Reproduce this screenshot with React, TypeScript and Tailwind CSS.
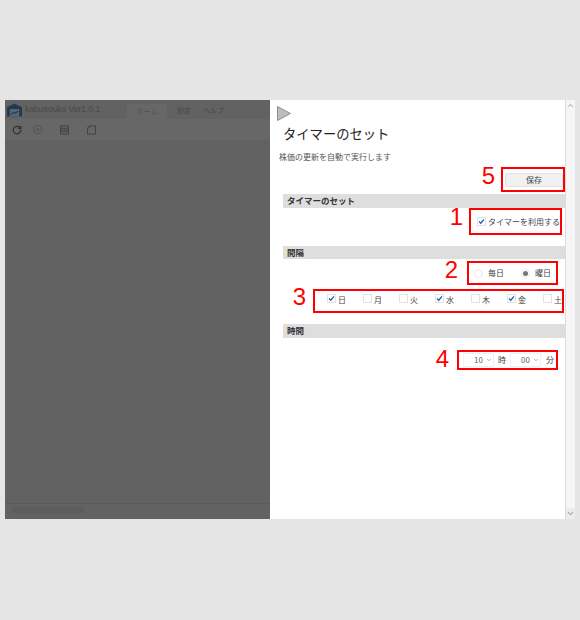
import { RotateCw, ChevronUp, ChevronDown } from "lucide-react";

const days = [
  { label: "日", on: true },
  { label: "月", on: false },
  { label: "火", on: false },
  { label: "水", on: true },
  { label: "木", on: false },
  { label: "金", on: true },
  { label: "土", on: false },
];

function Tick({ on }: { on: boolean }) {
  return (
    <span className="w-[9px] h-[9px] shrink-0 border border-[#e2e2e2] bg-white flex items-center justify-center">
      {on && (
        <svg viewBox="0 0 10 10" className="w-[9px] h-[9px]">
          <path d="M1.5 5 L4 7.5 L8.5 2" fill="none" stroke="#1d5fa8" strokeWidth="1.8" />
        </svg>
      )}
    </span>
  );
}

function Bar({ title, className }: { title: string; className: string }) {
  return (
    <div className={`ml-[13px] bg-[#dedede] pl-[4px] text-[8.5px] leading-[13px] font-bold text-[#333] ${className}`}>
      {title}
    </div>
  );
}

function Num({ n, className }: { n: string; className: string }) {
  return (
    <span className={`h-0 flex items-center text-[24px] leading-none text-[#ff0000] font-['Liberation_Sans',sans-serif] ${className}`}>
      {n}
    </span>
  );
}

function Drop({ value }: { value: string }) {
  return (
    <span className="w-[31px] h-[14px] border border-[#f0f0f0] flex items-center justify-end pr-[1px] gap-[3px] text-[8px] text-[#666]">
      {value}
      <ChevronDown className="w-[6px] h-[6px] text-[#999]" strokeWidth={3} />
    </span>
  );
}

export default function App() {
  return (
    <div className="w-[580px] h-[620px] bg-[#e5e5e5] pt-[100px] pl-[5px] flex items-start overflow-hidden font-['Noto_Sans_CJK_JP',sans-serif]">
      {/* dimmed app behind the panel */}
      <div className="w-[265px] h-[419px] bg-[#626262] flex flex-col">
        <div className="h-[19px] flex items-end text-[#484848]">
          <svg viewBox="0 0 16 14" className="w-[15px] h-[14px] ml-[2px] mb-[2px]">
            <path d="M0 14 V4 L8 0 L16 4 V14 Z" fill="#1f3a56" />
            <rect x="3" y="6" width="10" height="8" fill="#5b6670" />
            <path d="M4 12 L7 9.5 L9 10.5 L12 8" fill="none" stroke="#1f3a56" strokeWidth="1.2" />
          </svg>
          <span className="ml-[3px] mb-[3px] w-[102px] text-[8.5px] leading-[14px] font-['Liberation_Sans',sans-serif] whitespace-nowrap">
            kabusouko Ver1.0.1
          </span>
          <span className="w-[40px] h-[15px] bg-[#676767] text-center text-[7px] leading-[15px] text-[#3e566e]">ホーム</span>
          <span className="ml-[10px] mb-[2px] text-[7px] leading-[13px]">設定</span>
          <span className="ml-[12px] mb-[2px] text-[7px] leading-[13px]">ヘルプ</span>
        </div>
        <div className="h-[21px] bg-[#676767] flex items-center pl-[7px] text-[#2f2f2f]">
          <RotateCw className="w-[10px] h-[10px]" strokeWidth={3} />
          <svg viewBox="0 0 10 10" className="ml-[11px] w-[9px] h-[9px]">
            <circle cx="5" cy="5" r="4.5" fill="none" stroke="#525252" />
            <path d="M3.3 3.3 L6.7 6.7 M6.7 3.3 L3.3 6.7" stroke="#525252" />
          </svg>
          <svg viewBox="0 0 10 10" className="ml-[18px] w-[9px] h-[10px]">
            <path d="M0.5 0.5 H9.5 V9.5 H0.5 Z M0.5 3 H9.5 M0.5 5 H9.5 M0.5 7 H9.5" fill="none" stroke="#3f3f3f" />
          </svg>
          <svg viewBox="0 0 10 10" className="ml-[18px] w-[9px] h-[10px]">
            <path d="M0.5 2.5 L2.5 2.5 L2.5 0.5 H9.5 V9.5 H0.5 Z" fill="none" stroke="#3f3f3f" />
          </svg>
        </div>
        <div className="flex-1" />
        <div className="h-[16px] border-t border-[#5a5a5a] pl-[7px] pt-[3px]">
          <div className="w-[72px] h-[6px] bg-[#5c5c5c]" />
        </div>
      </div>

      {/* settings panel */}
      <div className="w-[296px] h-[419px] bg-white border-r border-[#dcdcdc] text-[#444] overflow-hidden">
        <svg viewBox="0 0 14 15" className="ml-[7px] mt-[6px] w-[14px] h-[15px]">
          <path d="M0.5 0.5 L13.5 7.5 L0.5 14.5 Z" fill="#bdbdbd" stroke="#8f8f8f" />
        </svg>
        <h1 className="ml-[13px] mt-[4px] text-[13.3px] leading-[18px] text-[#222]">タイマーのセット</h1>
        <p className="ml-[9px] mt-[7px] text-[8px] leading-[14px] text-[#555]">株価の更新を自動で実行します</p>

        <div className="mt-[3px] flex justify-end items-center">
          <Num n="5" className="mr-[6px] -mt-[8px]" />
          <div className="w-[64px] h-[25px] border-2 border-[#ff0000] flex items-start justify-end pt-[4px]">
            <button className="w-[58px] h-[14px] bg-[#f1f1f1] border border-[#e2e2e2] rounded-[2px] text-[8px] leading-none text-[#444]">保存</button>
          </div>
        </div>

        <Bar title="タイマーのセット" className="mt-[2px] h-[14px]" />
        <div className="mr-[3px] flex justify-end items-center">
          <Num n="1" className="mr-[6px] -mt-[10px]" />
          <div className="w-[93px] h-[27px] border-2 border-[#ff0000] flex items-center pl-[6px] gap-[2px] text-[8px]">
            <Tick on />
            <span className="whitespace-nowrap">タイマーを利用する</span>
          </div>
        </div>

        <Bar title="間隔" className="mt-[11px] h-[13px]" />
        <div className="mt-[2px] mr-[7px] flex justify-end items-center">
          <Num n="2" className="mr-[9px] -mt-[6px]" />
          <div className="w-[91px] h-[24px] border-2 border-[#ff0000] flex items-center pl-[5px] text-[8px]">
            <span className="w-[9px] h-[9px] rounded-full border border-[#e8e8e8]" />
            <span className="ml-[5px]">毎日</span>
            <span className="ml-[17px] w-[9px] h-[9px] rounded-full border border-[#e8e8e8] flex items-center justify-center">
              <span className="w-[5px] h-[5px] rounded-full bg-[#777]" />
            </span>
            <span className="ml-[5px]">曜日</span>
          </div>
        </div>

        <div className="mt-[4px] mr-px flex justify-end items-center">
          <Num n="3" className="mr-[7px] -mt-[9px]" />
          <div className="w-[251px] h-[24px] border-2 border-[#ff0000] flex items-start pt-[3px] pl-[12px] gap-[3px] text-[8px] overflow-hidden">
            {days.map((d) => (
              <span key={d.label} className="w-[33px] h-[11px] shrink-0 flex items-start gap-[2px]">
                <Tick on={d.on} />
                <span className="leading-[11px]">{d.label}</span>
              </span>
            ))}
          </div>
        </div>

        <Bar title="時間" className="mt-[11px] h-[14px]" />
        <div className="mt-[12px] mr-[7px] flex justify-end items-center">
          <Num n="4" className="mr-[8px] -mt-[2px]" />
          <div className="w-[101px] h-[20px] border-2 border-[#ff0000] flex items-center pl-[4px] text-[8px]">
            <Drop value="10" />
            <span className="ml-[4px]">時</span>
            <span className="ml-[4px]">
              <Drop value="00" />
            </span>
            <span className="ml-[5px]">分</span>
          </div>
        </div>
      </div>

      {/* scrollbar */}
      <div className="w-[9px] h-[419px] bg-[#f6f6f6] flex flex-col justify-between items-center text-[#c4c4c4]">
        <span className="h-[11px] w-full flex items-center justify-center">
          <ChevronUp className="w-[9px] h-[9px]" strokeWidth={3} />
        </span>
        <span className="h-[11px] w-full bg-[#ececec] flex items-center justify-center">
          <ChevronDown className="w-[9px] h-[9px] text-[#aaa]" strokeWidth={3} />
        </span>
      </div>
    </div>
  );
}
